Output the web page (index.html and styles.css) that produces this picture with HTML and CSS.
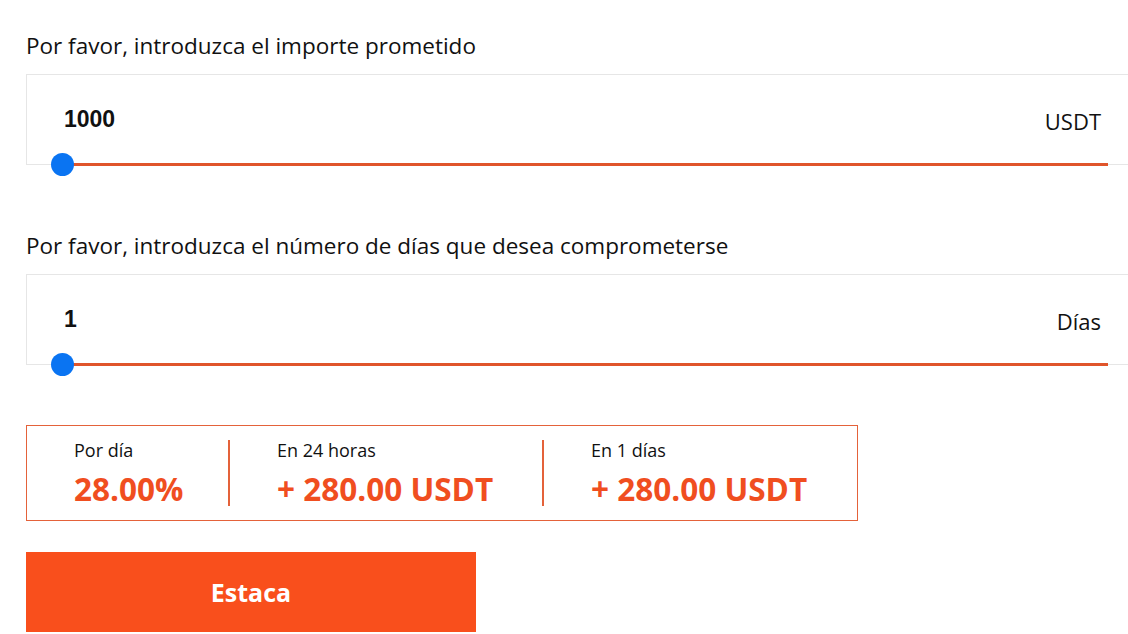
FILE: index.html
```html
<!DOCTYPE html>
<html lang="es">
<head>
  <meta charset="UTF-8" />
  <title>Estaca</title>
  <link rel="stylesheet" href="styles.css">
</head>
<body>
  <div class="page">
    <div class="field">
      <label class="field-label">Por favor, introduzca el importe prometido</label>
      <div class="field-box">
        <div class="field-row">
          <span class="field-value">1000</span>
          <span class="field-unit">USDT</span>
        </div>
        <div class="slider">
          <span class="slider-thumb"></span>
          <span class="slider-track"></span>
        </div>
      </div>
    </div>

    <div class="field field-second">
      <label class="field-label">Por favor, introduzca el número de días que desea comprometerse</label>
      <div class="field-box">
        <div class="field-row">
          <span class="field-value">1</span>
          <span class="field-unit">Días</span>
        </div>
        <div class="slider">
          <span class="slider-thumb"></span>
          <span class="slider-track"></span>
        </div>
      </div>
    </div>

    <div class="summary">
      <div class="summary-col">
        <div class="summary-label">Por día</div>
        <div class="summary-value">28.00%</div>
      </div>
      <div class="summary-divider"></div>
      <div class="summary-col">
        <div class="summary-label">En 24 horas</div>
        <div class="summary-value">+ 280.00 USDT</div>
      </div>
      <div class="summary-divider"></div>
      <div class="summary-col">
        <div class="summary-label">En 1 días</div>
        <div class="summary-value">+ 280.00 USDT</div>
      </div>
    </div>

    <button class="stake-btn">Estaca</button>
  </div>
</body>
</html>
```

FILE: styles.css
```css
html, body {
  margin: 0;
  padding: 0;
  background: #fff;
  overflow: hidden;
}

body {
  font-family: "Open Sans", "Noto Sans", sans-serif;
  color: #111;
}

.page {
  padding: 32px 0 0 26px;
}

.field-label {
  display: block;
  font-size: 22.5px;
  line-height: 28px;
  margin-bottom: 14px;
}

.field-second {
  margin-top: 67px;
}

.field-box {
  box-sizing: border-box;
  height: 91px;
  margin-right: -20px;
  border: 1px solid #e6e6e6;
  padding-top: 30px;
  display: flex;
  flex-direction: column;
}

.field-row {
  display: flex;
  justify-content: space-between;
  align-items: center;
  height: 28px;
  padding: 0 46px 0 37px;
}

.field-value {
  font-family: "Liberation Sans", Arial, sans-serif;
  font-weight: bold;
  font-size: 23px;
}

.field-unit {
  font-size: 22px;
  padding-top: 4px;
}

.slider {
  margin-top: auto;
  margin-bottom: -12px;
  height: 23px;
  display: flex;
  align-items: center;
  padding: 0 39px 0 24px;
}

.slider-thumb {
  width: 23px;
  height: 23px;
  border-radius: 50%;
  background: #0a74f2;
  flex: none;
  position: relative;
  z-index: 1;
}

.slider-track {
  flex: 1;
  height: 3px;
  margin-left: -4px;
  background: #e0552b;
}

.summary {
  margin-top: 60px;
  box-sizing: border-box;
  width: 832px;
  height: 96px;
  border: 1px solid #e4623a;
  display: grid;
  grid-template-columns: 201px 2px 312px 2px 1fr;
  align-items: center;
}

.summary-col {
  padding-left: 47px;
}

.summary-divider {
  height: 66px;
  background: #e4623a;
}

.summary-label {
  font-size: 18px;
  line-height: 24px;
  margin-bottom: 8px;
}

.summary-value {
  font-size: 31.5px;
  line-height: 38px;
  font-weight: bold;
  color: #f04e1f;
}

.stake-btn {
  display: block;
  margin-top: 31px;
  width: 450px;
  height: 80px;
  border: none;
  background: #f94f1c;
  color: #fff;
  font-family: "Open Sans", "Noto Sans", sans-serif;
  font-weight: bold;
  font-size: 25px;
  cursor: pointer;
}
```
